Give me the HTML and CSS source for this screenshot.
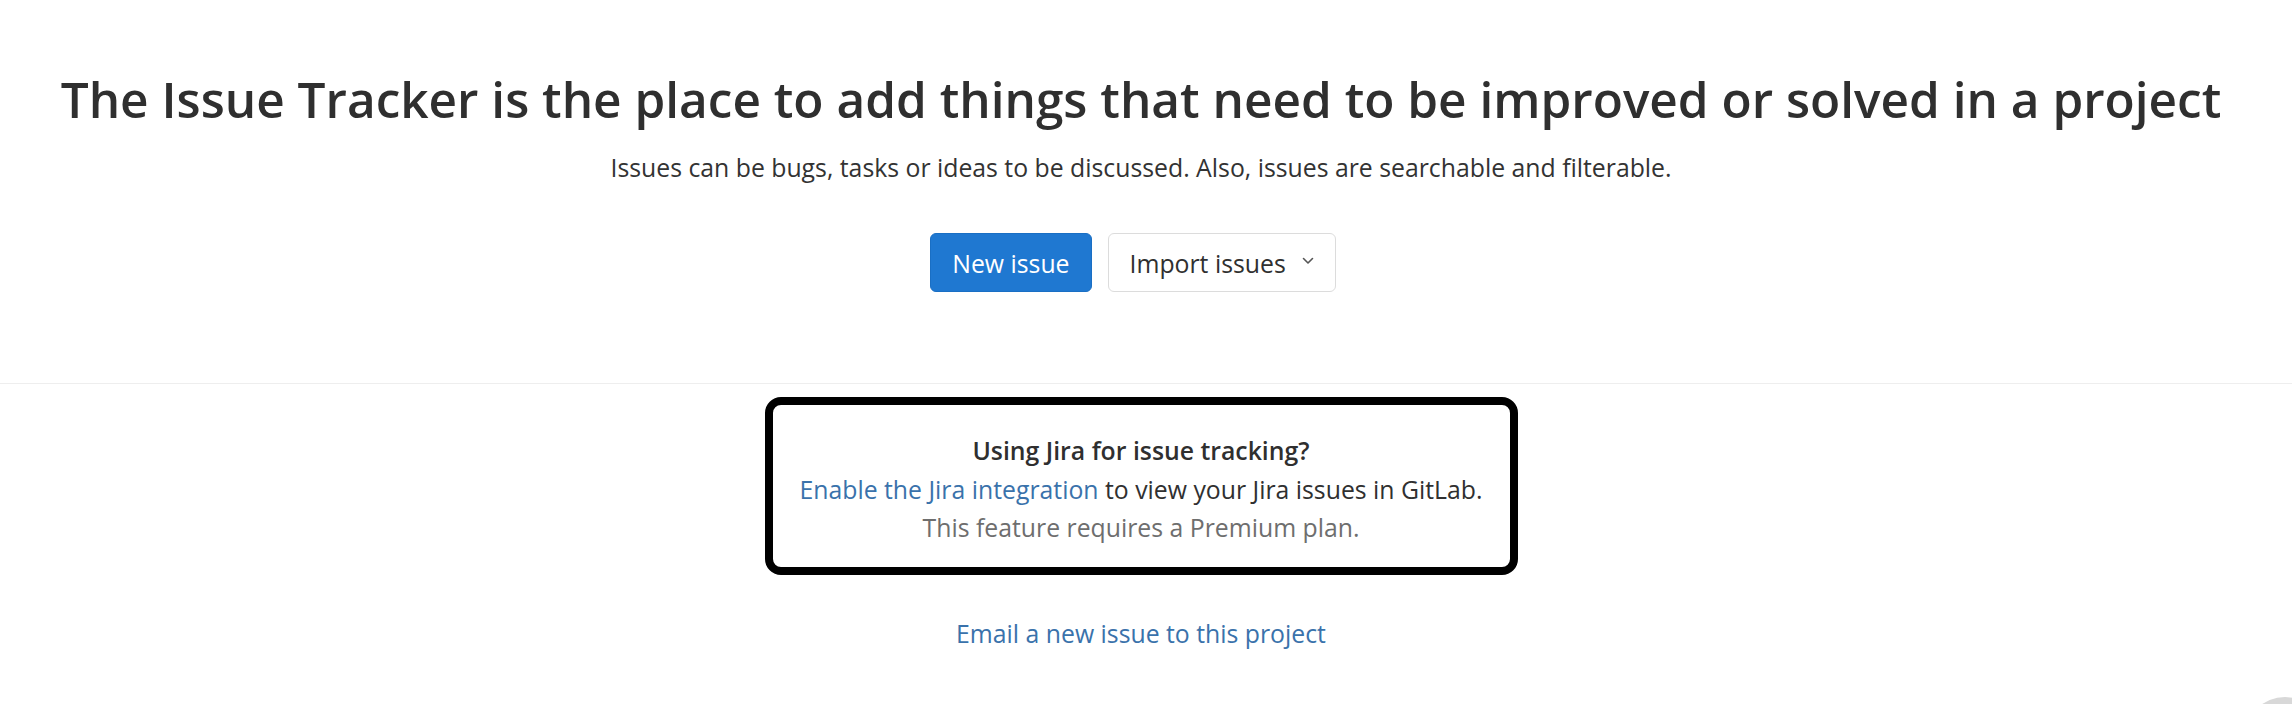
FILE: index.html
```html
<!DOCTYPE html>
<html lang="en">
<head>
<meta charset="utf-8">
<title>Issues</title>
<link rel="stylesheet" href="styles.css">
</head>
<body>
<main class="page">
  <section class="empty-state">
    <h1 class="title">The Issue Tracker is the place to add things that need to be improved or solved in a project</h1>
    <p class="desc">Issues can be bugs, tasks or ideas to be discussed. Also, issues are searchable and filterable.</p>
    <div class="actions">
      <a class="btn btn-primary" href="#">New issue</a>
      <button class="btn btn-default" type="button">Import issues
        <svg class="chevron" width="12" height="8" viewBox="0 0 12 8" aria-hidden="true"><path d="M1.5 1.5 L6 6 L10.5 1.5" fill="none" stroke="#555" stroke-width="1.6" stroke-linecap="round" stroke-linejoin="round"/></svg>
      </button>
    </div>
  </section>
  <hr class="divider">
  <section class="jira-section">
    <div class="jira-card">
      <p class="jira-title">Using Jira for issue tracking?</p>
      <p class="jira-line"><a class="link" href="#">Enable the Jira integration</a> to view your Jira issues in GitLab.</p>
      <p class="jira-line muted">This feature requires a Premium plan.</p>
    </div>
    <a class="link email-link" href="#">Email a new issue to this project</a>
  </section>
  <div class="help-fab" aria-hidden="true"></div>
</main>
</body>
</html>
```
FILE: styles.css
```css
* { box-sizing: border-box; }
html, body { margin: 0; padding: 0; background: #ffffff; }
body {
  font-family: "Open Sans", "Noto Sans", sans-serif;
  color: #303030;
  overflow: hidden;
  height: 704px;
}
.page { width: 2292px; }
.empty-state {
  display: flex;
  flex-direction: column;
  align-items: center;
  padding: 69px 10px 0 0;
}
.title {
  margin: 0;
  font-size: 49.5px;
  line-height: 60px;
  font-weight: 600;
  color: #2f2f2f;
  white-space: nowrap;
}
.desc {
  margin: 22px 0 0;
  font-size: 24.8px;
  line-height: 32px;
  color: #333;
  white-space: nowrap;
}
.actions {
  display: flex;
  gap: 16px;
  margin-top: 50px;
  margin-right: 16px;
}
.btn {
  display: inline-flex;
  align-items: center;
  height: 59px;
  padding: 0 21px;
  font-family: inherit;
  font-size: 24.8px;
  border-radius: 6px;
  text-decoration: none;
  cursor: pointer;
}
.btn-primary {
  background: #1f78d1;
  border: 1px solid #1a6fc4;
  color: #fff;
}
.btn-default {
  background: #fff;
  border: 1px solid #dcdcdc;
  color: #303030;
  gap: 16px;
}
.chevron { display: block; margin-top: -4px; }
.divider {
  margin: 91px 0 0;
  border: 0;
  border-top: 1px solid #eeeeee;
  height: 0;
}
.jira-section {
  display: flex;
  flex-direction: column;
  align-items: center;
  padding: 13px 10px 0 0;
}
.jira-card {
  width: 753px;
  height: 178px;
  border: 8px solid #000;
  border-radius: 16px;
  padding: 26px 0 0;
  text-align: center;
}
.jira-card p { margin: 0; font-size: 24.8px; line-height: 38.5px; white-space: nowrap; }
.jira-title { font-weight: 600; color: #2f2f2f; }
.muted { color: #6e6e6e; }
.link { color: #3a72ab; text-decoration: none; }
.email-link {
  margin-top: 42px;
  font-size: 24.8px;
  line-height: 32px;
}
.help-fab {
  position: fixed;
  right: -33px;
  bottom: -73px;
  width: 80px;
  height: 80px;
  border-radius: 50%;
  background: #d8d8d8;
}
```
